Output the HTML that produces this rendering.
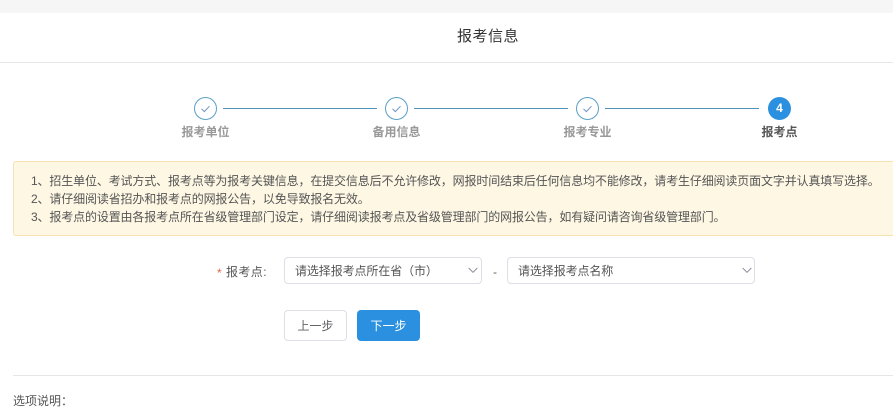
<!DOCTYPE html>
<html lang="zh">
<head>
<meta charset="utf-8">
<style>
html,body{margin:0;padding:0;background:#fff}
body{width:893px;height:402px;position:relative;overflow:hidden;font-family:"Liberation Sans","Noto Sans CJK SC",sans-serif;color:#606266}
.a{position:absolute;white-space:nowrap}
.c{width:21px;height:21px;border:1px solid #5b9fc7;border-radius:50%;background:#fff;box-sizing:content-box}
.l{height:1px;background:#4f93bd;top:108px}
.t{font-size:12px;font-weight:bold;color:#999;line-height:16px;top:124px;transform:translateX(-50%)}
.sel{border:1px solid #dcdfe6;border-radius:4px;box-sizing:border-box;height:27px;top:257px;background:#fff;font-size:12px;line-height:27px;color:#555;padding-left:10px;letter-spacing:-.1px}
.btn{border-radius:4px;box-sizing:border-box;height:31px;top:310px;width:63px;text-align:center;font-size:12px;line-height:31px}
</style>
</head>
<body>
<div class="a" style="left:0;top:0;width:893px;height:13px;background:#f6f6f6"></div>
<div class="a" style="left:0;top:62px;width:893px;height:1px;background:#e6e6e6"></div>
<div class="a" style="left:457px;top:27px;font-size:15px;line-height:20px;color:#333;letter-spacing:.5px">报考信息</div>

<div class="a c" style="left:194px;top:97px"></div>
<div class="a c" style="left:385px;top:97px"></div>
<div class="a c" style="left:576px;top:97px"></div>
<svg class="a" style="left:194px;top:97px" width="23" height="23" viewBox="0 0 23 23"><path d="M7.5 11.8l2.8 2.8 5.2-5.4" fill="none" stroke="#6f93c4" stroke-width="1"/></svg>
<svg class="a" style="left:385px;top:97px" width="23" height="23" viewBox="0 0 23 23"><path d="M7.5 11.8l2.8 2.8 5.2-5.4" fill="none" stroke="#6f93c4" stroke-width="1"/></svg>
<svg class="a" style="left:576px;top:97px" width="23" height="23" viewBox="0 0 23 23"><path d="M7.5 11.8l2.8 2.8 5.2-5.4" fill="none" stroke="#6f93c4" stroke-width="1"/></svg>
<div class="a" style="left:768px;top:97px;width:23px;height:23px;border-radius:50%;background:#2b90e0;color:#fff;font-size:12px;font-weight:bold;line-height:23px;text-align:center">4</div>
<div class="a l" style="left:223px;width:154px"></div>
<div class="a l" style="left:414px;width:154px"></div>
<div class="a l" style="left:605px;width:154px"></div>
<div class="a t" style="left:205.5px">报考单位</div>
<div class="a t" style="left:396.5px">备用信息</div>
<div class="a t" style="left:587.5px">报考专业</div>
<div class="a t" style="left:779.5px;color:#555">报考点</div>

<div class="a" style="left:13px;top:161px;width:890px;height:75px;box-sizing:border-box;background:#fdf7e4;border:1px solid #f7e2b2;border-radius:3px"></div>
<div class="a" style="left:31px;top:172px;font-size:12px;line-height:18px;color:#555;letter-spacing:-.14px">1、招生单位、考试方式、报考点等为报考关键信息，在提交信息后不允许修改，网报时间结束后任何信息均不能修改，请考生仔细阅读页面文字并认真填写选择。<br>2、请仔细阅读省招办和报考点的网报公告，以免导致报名无效。<br>3、报考点的设置由各报考点所在省级管理部门设定，请仔细阅读报考点及省级管理部门的网报公告，如有疑问请咨询省级管理部门。</div>

<div class="a" style="left:217px;top:265px;font-size:12px;line-height:16px;color:#e5654a">*</div>
<div class="a" style="left:226px;top:264px;font-size:12px;line-height:16px;color:#555;letter-spacing:.4px">报考点:</div>
<div class="a sel" style="left:284px;width:198px">请选择报考点所在省（市）</div>
<svg class="a" style="left:468px;top:267px" width="10" height="7" viewBox="0 0 10 7"><path d="M.7 1l4.3 4.3L9.3 1" fill="none" stroke="#8a8f99" stroke-width="1"/></svg>
<div class="a" style="left:493px;top:264px;font-size:12px;line-height:16px;color:#606266">-</div>
<div class="a sel" style="left:507px;width:248px">请选择报考点名称</div>
<svg class="a" style="left:742px;top:267px" width="10" height="7" viewBox="0 0 10 7"><path d="M.7 1l4.3 4.3L9.3 1" fill="none" stroke="#8a8f99" stroke-width="1"/></svg>

<div class="a btn" style="left:284px;border:1px solid #dcdfe6;background:#fff;color:#606266;line-height:29px;padding-top:1px">上一步</div>
<div class="a btn" style="left:357px;border:1px solid #2b90e0;background:#2b90e0;color:#fff;line-height:29px;padding-top:1px">下一步</div>

<div class="a" style="left:13px;top:375px;width:880px;height:1px;background:#e6e6e6"></div>
<div class="a" style="left:13px;top:393px;font-size:12px;line-height:16px;color:#555">选项说明：</div>
</body>
</html>
